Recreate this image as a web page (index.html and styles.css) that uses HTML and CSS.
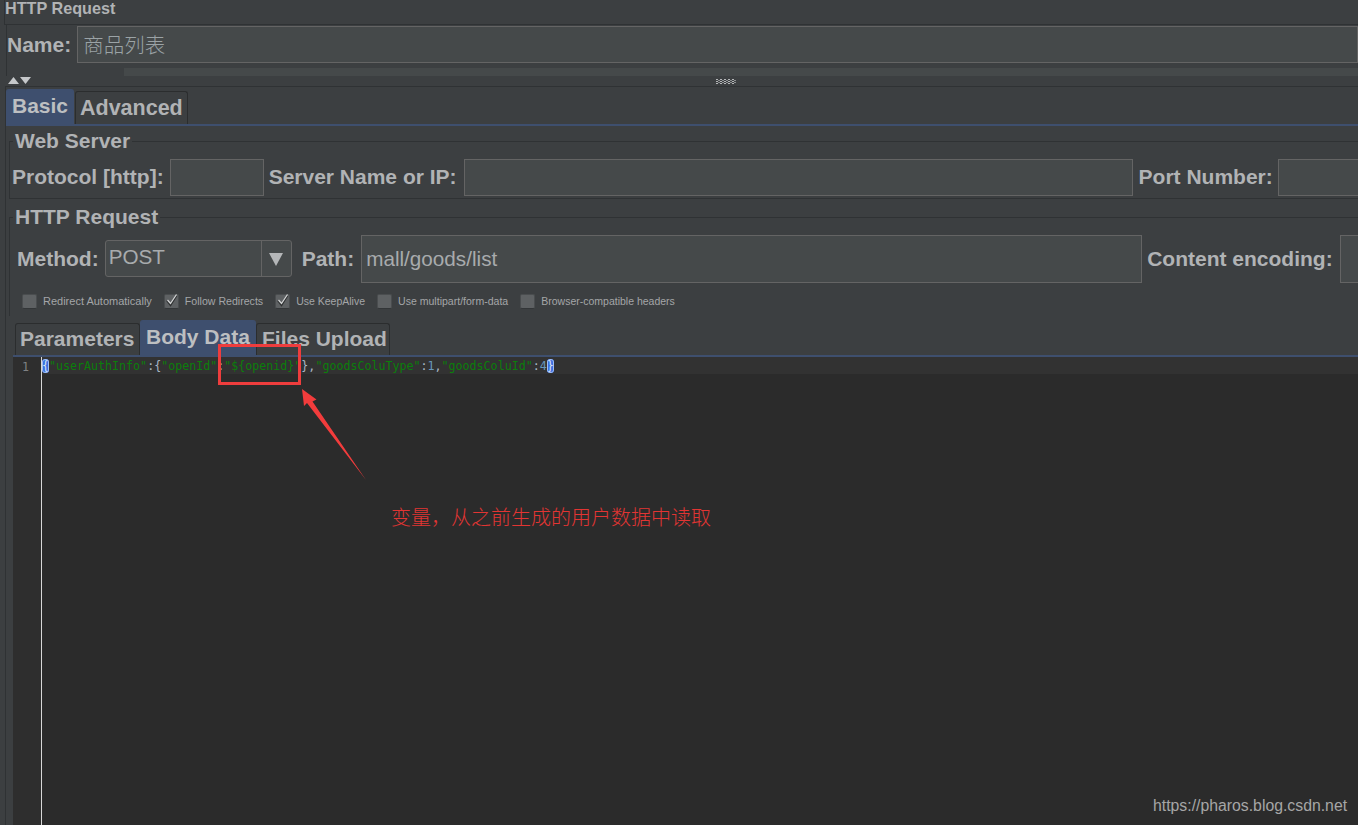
FILE: index.html
```html
<!DOCTYPE html>
<html lang="en">
<head>
<meta charset="utf-8">
<title>HTTP Request</title>
<link rel="stylesheet" href="styles.css">
</head>
<body>
<div class="app">
  <div class="title">HTTP Request</div>
  <div class="name-row">
    <label class="label">Name:</label>
    <div class="input name-input">商品列表</div>
  </div>
  <div class="splitter">
    <div class="split-top"><div class="split-bar"></div></div>
    <div class="split-handles">
      <svg class="arrows" width="24" height="7" viewBox="0 0 24 7"><path d="M0 7L5.500 0L11 7Z" fill="#c6c8ca"/><path d="M12 0H23L17.500 7Z" fill="#c6c8ca"/></svg>
      <svg class="grip" width="20" height="5" viewBox="0 0 20 5"><defs><pattern id="gripdots" width="4" height="2" patternUnits="userSpaceOnUse"><rect width="2" height="1" fill="#b4b6b8"/><rect x="2" y="1" width="2" height="1" fill="#8d9092"/></pattern></defs><rect width="20" height="5" fill="url(#gripdots)"/></svg>
    </div>
  </div>
  <div class="pane">
    <div class="tabs main-tabs">
      <div class="tab selected tab-basic">Basic</div>
      <div class="tab tab-advanced">Advanced</div>
    </div>
    <fieldset class="group web-server">
      <legend>Web Server</legend>
      <div class="row">
        <label class="label">Protocol [http]:</label>
        <div class="input w-protocol"></div>
        <label class="label">Server Name or IP:</label>
        <div class="input w-server"></div>
        <label class="label port-label">Port Number:</label>
        <div class="input w-port"></div>
      </div>
    </fieldset>
    <fieldset class="group http-request">
      <legend>HTTP Request</legend>
      <div class="row method-row">
        <label class="label">Method:</label>
        <div class="combo">
          <span class="combo-value">POST</span>
          <span class="combo-button"><svg width="14" height="13" viewBox="0 0 14 13"><path d="M0 0H14L7 13Z" fill="#b4b6b8"/></svg></span>
        </div>
        <label class="label path-label">Path:</label>
        <div class="input w-path">mall/goods/list</div>
        <label class="label">Content encoding:</label>
        <div class="input w-encoding"></div>
      </div>
      <div class="checks">
        <div class="check check-wide"><span class="box"></span>Redirect Automatically</div>
        <div class="check check-mid"><span class="box"><svg width="15" height="15" viewBox="0 0 15 15"><path d="M3 6.500L6.500 11L12.500 1.500" fill="none" stroke="#2e3031" stroke-width="2"/><path d="M3.500 6L6.500 9.500L12.500 0.500" fill="none" stroke="#d4d6d7" stroke-width="1.300"/></svg></span>Follow Redirects</div>
        <div class="check"><span class="box"><svg width="15" height="15" viewBox="0 0 15 15"><path d="M3 6.500L6.500 11L12.500 1.500" fill="none" stroke="#2e3031" stroke-width="2"/><path d="M3.500 6L6.500 9.500L12.500 0.500" fill="none" stroke="#d4d6d7" stroke-width="1.300"/></svg></span>Use KeepAlive</div>
        <div class="check check-multipart"><span class="box"></span>Use multipart/form-data</div>
        <div class="check"><span class="box"></span>Browser-compatible headers</div>
      </div>
    </fieldset>
    <div class="tabs body-tabs">
      <div class="tab tab-params">Parameters</div>
      <div class="tab selected tab-body">Body Data</div>
      <div class="tab tab-files">Files Upload</div>
    </div>
    <div class="editor">
      <div class="gutter"><span class="line-no">1</span></div>
      <div class="code">
        <div class="code-line"><span class="match">{</span><span class="s">"userAuthInfo"</span><span class="p">:{</span><span class="s">"openId"</span><span class="p">:</span><span class="s">"${openid}"</span><span class="p">},</span><span class="s">"goodsColuType"</span><span class="p">:</span><span class="n">1</span><span class="p">,</span><span class="s">"goodsColuId"</span><span class="p">:</span><span class="n">4</span><span class="match">}</span></div>
      </div>
    </div>
  </div>

  <div class="mark-box"></div>
  <svg class="mark-arrow" width="70" height="96" viewBox="0 0 70 96"><path d="M2 1L16.500 11.500L12.500 13.500L66 92L7 15L4 18Z" fill="#f23c3c"/></svg>
  <div class="mark-text">变量，从之前生成的用户数据中读取</div>
  <div class="watermark">https://pharos.blog.csdn.net</div>
</div>
</body>
</html>
```
FILE: styles.css
```css
* { box-sizing: border-box; }
html, body { margin: 0; padding: 0; }
body { background: #3c3f41; }

.app {
  position: relative;
  width: 1358px;
  height: 825px;
  overflow: hidden;
  background: #3c3f41;
  color: #b1b3b5;
  font-family: "Liberation Sans", Arial, sans-serif;
}

.title {
  height: 25px;
  margin-left: 4px;
  padding-left: 0;
  border-left: 1px solid #2f3234;
  border-bottom: 1px solid #2f3234;
  font-size: 16.2px;
  font-weight: 700;
  line-height: 16px;
}

.label {
  flex: none;
  font-size: 21px;
  font-weight: 700;
  line-height: 24px;
  white-space: nowrap;
  color: #b1b3b5;
}

.input {
  flex: none;
  height: 37px;
  padding-left: 5px;
  background: #45494a;
  border: 1px solid #646464;
  color: #a8abad;
  font-size: 20.7px;
  line-height: 45px;
  white-space: nowrap;
}

.name-row {
  display: flex;
  align-items: center;
  gap: 6px;
  height: 38px;
  margin-left: 6px;
  padding: 1px 0 0;
  border-left: 1px solid #2f3234;
}
.name-input {
  flex: 1;
  padding-left: 5px;
  color: #9ba3a6;
  font-family: "Noto Sans CJK SC", sans-serif;
  font-size: 20.500px;
  font-weight: 300;
  line-height: 35px;
}

.splitter { height: 23px; }
.split-top {
  height: 13px;
  margin-left: 6px;
  padding: 5px 0 0 117px;
  border-left: 1px solid #2f3234;
}
.split-bar {
  height: 8px;
  background: #45494a;
}
.split-handles {
  display: flex;
  align-items: flex-start;
  margin: 1px 0 0 8px;
}
.arrows { flex: none; }
.grip { flex: none; margin: 2px 0 0 684px; }

.pane {
  height: 739px;
  margin-left: 5px;
  border-top: 1px solid #2f3234;
  border-left: 1px solid #2f3234;
  display: flex;
  flex-direction: column;
}

.tabs { display: flex; flex: none; align-items: flex-end; }
.main-tabs {
  height: 39px;
  border-bottom: 2px solid #3e4f6e;
}
.tab {
  font-size: 21px;
  font-weight: 700;
  line-height: 24px;
  white-space: nowrap;
  background: #3c3f41;
  border: 1px solid #2b2d2e;
  border-bottom: 0;
  border-radius: 3px 3px 0 0;
  color: #b1b3b5;
}
.tab.selected {
  background: #3e4f6e;
  border-color: #3e4f6e;
  color: #bdbfc1;
}
.tab-basic { width: 68px; height: 35px; padding: 4px 0 0 5px; }
.tab-advanced { width: 113px; height: 33px; margin-left: 1px; padding: 4px 0 0 4px; font-size: 21.500px; }

.group {
  flex: none;
  min-width: 0;
  width: 1360px;
  border: 1px solid #2f3234;
  border-right: 0;
  padding: 0;
}
.group legend {
  padding: 0 2px;
  font-size: 21px;
  font-weight: 700;
  line-height: 24px;
  color: #b1b3b5;
}
.web-server {
  margin: 3px 0 0 3px;
  height: 70px;
  padding: 6px 0 0 2px;
}
.web-server legend { margin-left: 1px; }
.http-request {
  margin: 6px 0 0 3px;
  height: 111px;
  padding: 6px 0 0 7px;
  border-bottom: 0;
}
.http-request legend { margin-left: -4px; }

.row { display: flex; align-items: center; }
.web-server .row .label { margin-right: 6px; padding-bottom: 2px; }
.web-server .row .input { margin-right: 5px; }
.web-server .row .port-label { margin-left: 1px; margin-right: 5px; }
.w-protocol { width: 94px; }
.web-server .row .w-server { width: 669px; margin-left: 1px; }
.w-port { width: 100px; }

.method-row { height: 48px; }
.method-row .label { margin-right: 6px; }
.method-row .path-label { margin-left: 10px; margin-right: 7px; }
.w-path { width: 781px; height: 48px; margin-right: 5px; padding-left: 4px; line-height: 46px; }
.w-encoding { width: 60px; height: 48px; margin-left: 1px; }

.combo {
  flex: none;
  display: flex;
  width: 187px;
  height: 37px;
  margin-bottom: 2px;
  background: #45494a;
  border: 1px solid #646464;
  border-radius: 3px;
}
.combo-value {
  flex: 1;
  padding-left: 3px;
  font-size: 20.7px;
  line-height: 32px;
  color: #a8abad;
}
.combo-button {
  display: flex;
  flex: none;
  align-items: center;
  justify-content: center;
  width: 30px;
  padding-top: 2px;
  border-left: 1px solid #646464;
}

.checks {
  display: flex;
  gap: 12px;
  margin: 10px 0 0 5px;
}
.check {
  display: flex;
  align-items: center;
  gap: 6px;
  height: 16px;
  font-size: 10.500px;
  white-space: nowrap;
  color: #a4a6a8;
}
.check-wide { font-size: 11px; }
.check-mid { font-size: 10.600px; }
.check-multipart { font-size: 10.550px; }
.box {
  flex: none;
  display: block;
  width: 15px;
  height: 15px;
  background: #5e6163;
  border: 1px solid #4a4d4f;
  border-bottom-color: #333638;
  border-radius: 2px;
}
.box svg { display: block; margin: -1px; }

.body-tabs {
  height: 35px;
  margin: 4px 0 0 9px;
}
.tab-params { width: 125px; height: 32px; padding: 3px 0 0 4px; }
.tab-body { width: 116px; height: 35px; padding: 4px 0 0 5px; }
.tab-files { width: 134px; height: 32px; padding: 3px 0 0 5px; }

.editor {
  flex: 1;
  display: flex;
  margin-left: 7px;
  background: #2b2b2b;
  border-top: 2px solid #3e4f6e;
  min-height: 0;
}
.gutter {
  flex: none;
  width: 28px;
  padding: 3px 12px 0 0;
  text-align: right;
  background: #2e2e2e;
  font-family: "DejaVu Sans Mono", monospace;
  font-size: 11.650px;
  line-height: 15px;
  color: #7f8284;
}
.code {
  flex: 1;
  border-left: 1px solid #d8d8d8;
}
.code-line {
  height: 17px;
  background: #323232;
  font-family: "DejaVu Sans Mono", monospace;
  font-size: 11.650px;
  line-height: 19px;
  white-space: pre;
}
.s { color: #0b7f0b; }
.p { color: #a9b7c6; }
.n { color: #6897bb; }
.match {
  color: #d5e2f5;
  background: #3a6fe0;
  border-radius: 3px;
  outline: 1px solid #9fbcf2;
  outline-offset: -1px;
}

.mark-box {
  position: absolute;
  left: 218px;
  top: 344px;
  width: 83px;
  height: 41px;
  border: 3px solid #ee3d3d;
}
.mark-arrow {
  position: absolute;
  left: 300px;
  top: 388px;
}
.mark-text {
  position: absolute;
  left: 391px;
  top: 503px;
  font-family: "Noto Sans CJK SC", sans-serif;
  font-size: 20px;
  font-weight: 300;
  line-height: 28px;
  white-space: nowrap;
  color: #e23533;
}
.watermark {
  position: absolute;
  left: 1153px;
  top: 796px;
  font-size: 15.800px;
  line-height: 20px;
  white-space: nowrap;
  color: #a6a6a6;
}
```
